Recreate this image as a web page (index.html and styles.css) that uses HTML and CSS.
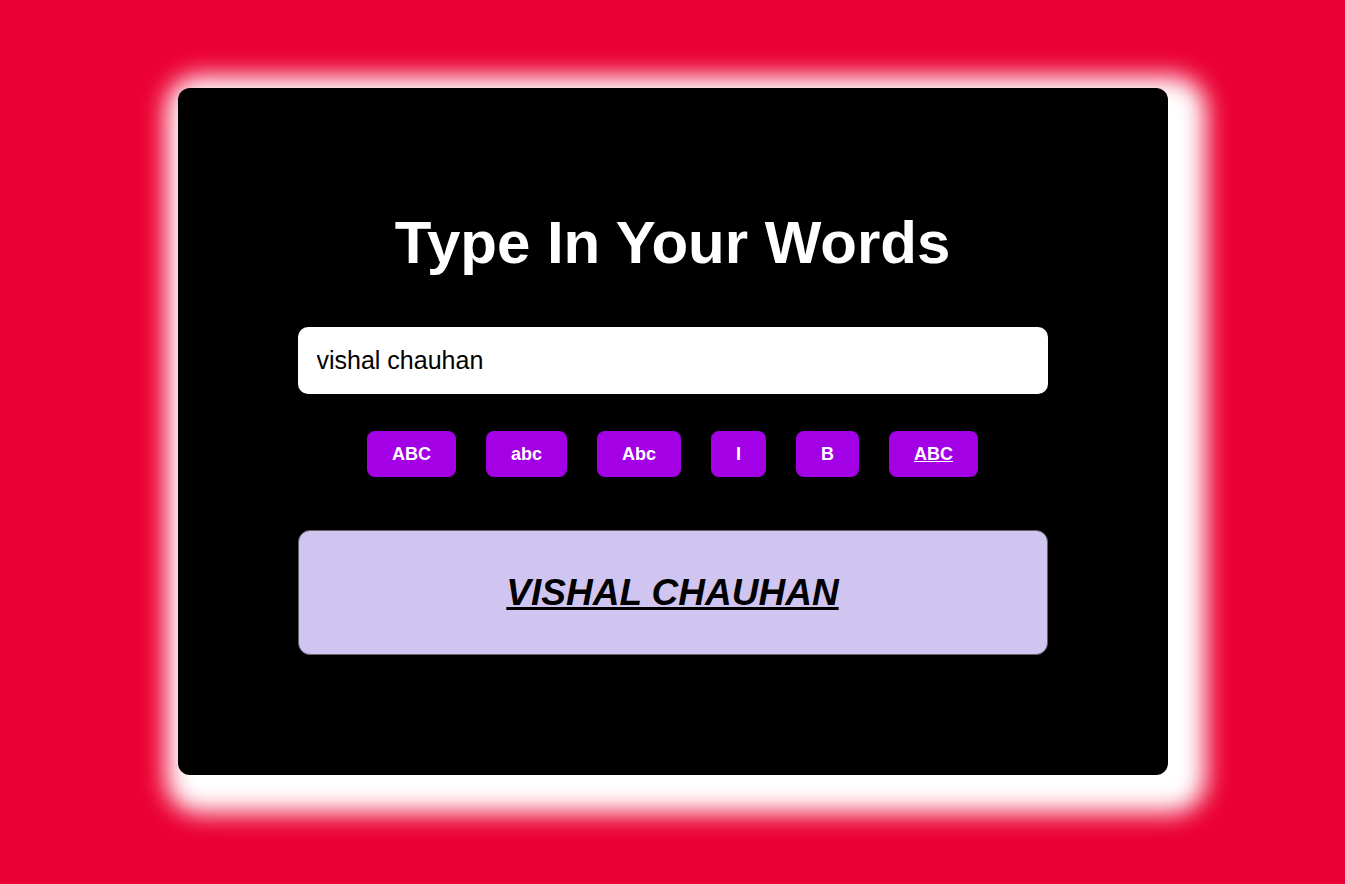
FILE: index.html
```html
<!DOCTYPE html>
<html lang="en">
<head>
<meta charset="utf-8">
<meta name="viewport" content="width=device-width, initial-scale=1">
<title>Type In Your Words</title>
<link rel="stylesheet" href="styles.css">
</head>
<body class="page">
<main class="card">
  <h1 class="title"><label for="words">Type In Your Words</label></h1>
  <input class="words" id="words" type="text" value="vishal chauhan">
  <div class="actions">
    <button class="action" type="button">ABC</button>
    <button class="action" type="button">abc</button>
    <button class="action" type="button">Abc</button>
    <button class="action" type="button">I</button>
    <button class="action" type="button">B</button>
    <button class="action action-underline" type="button">ABC</button>
  </div>
  <output class="result" for="words">VISHAL CHAUHAN</output>
</main>
</body>
</html>
```
FILE: styles.css
```css
* {
  box-sizing: border-box;
}

.page {
  margin: 0;
  padding: 88px 20px;
  min-height: 100vh;
  background: #eb0033;
  font-family: "Liberation Sans", Arial, sans-serif;
}

.card {
  display: flex;
  flex-direction: column;
  max-width: 990px;
  margin: 0 auto;
  padding: 120px;
  border-radius: 12px;
  background: #000;
  box-shadow: 13px 13px 25px 25px #fff;
}

.title {
  margin: 0 0 50px;
  color: #fff;
  font-size: 60px;
  line-height: 69px;
  text-align: center;
}

.words {
  width: 100%;
  height: 67px;
  padding: 0 19px;
  border: 0;
  border-radius: 10px;
  background: #fff;
  color: #000;
  font-family: inherit;
  font-size: 25px;
}

.actions {
  display: flex;
  flex-wrap: wrap;
  justify-content: center;
  gap: 30px;
  margin: 37px 0 53px;
}

.action {
  padding: 13px 25px;
  border: 0;
  border-radius: 8px;
  background: #a300e6;
  color: #fff;
  font-family: inherit;
  font-size: 18px;
  font-weight: bold;
  line-height: 20px;
  cursor: pointer;
}

.action-underline {
  text-decoration: underline;
}

.result {
  padding: 40px;
  border: 1px solid #626067;
  border-radius: 12px;
  background: #d0c5f0;
  color: #000;
  font-size: 37px;
  font-style: italic;
  font-weight: bold;
  line-height: 43px;
  text-align: center;
  text-decoration: underline;
}
```
